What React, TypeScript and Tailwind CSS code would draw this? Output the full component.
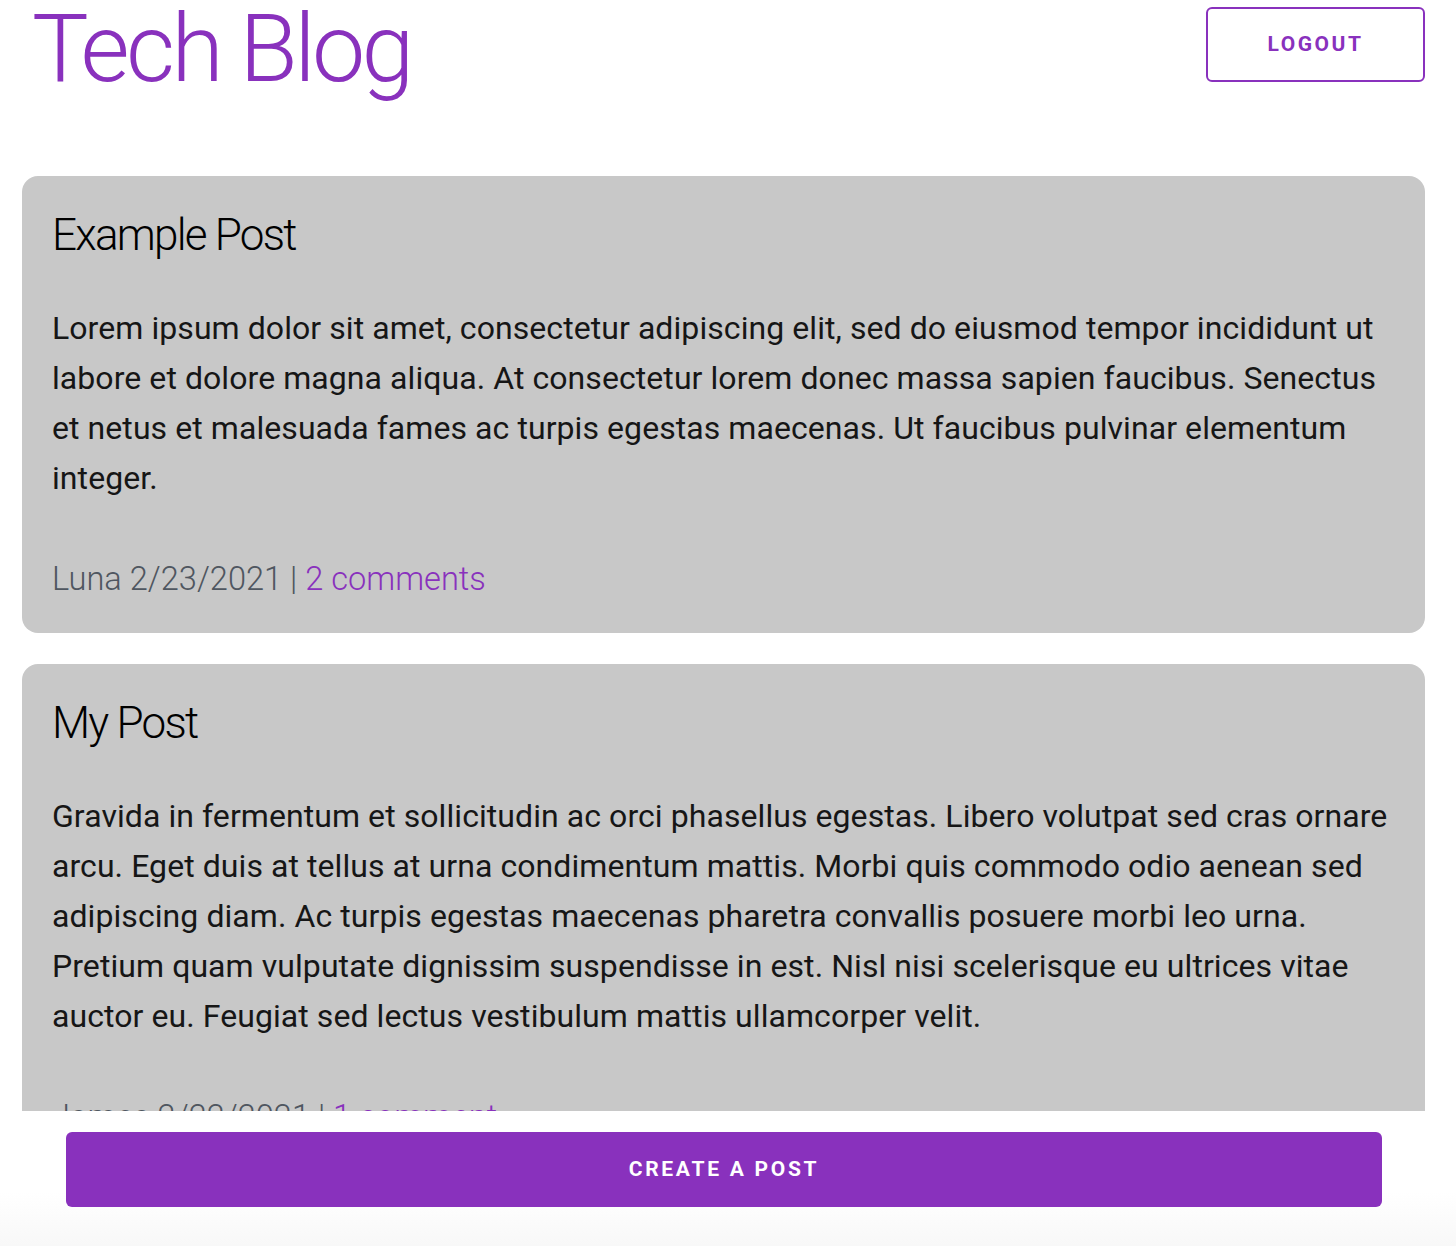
import React from "react";

type Post = {
    title: string;
    body: string;
    author: string;
    date: string;
    comments: number;
}

const posts: Post[] = [
    {
        title: "Example Post",
        body: "Lorem ipsum dolor sit amet, consectetur adipiscing elit, sed do eiusmod tempor incididunt ut labore et dolore magna aliqua. At consectetur lorem donec massa sapien faucibus. Senectus et netus et malesuada fames ac turpis egestas maecenas. Ut faucibus pulvinar elementum integer.",
        author: "Luna",
        date: "2/23/2021",
        comments: 2,
    },
    {
        title: "My Post",
        body: "Gravida in fermentum et sollicitudin ac orci phasellus egestas. Libero volutpat sed cras ornare arcu. Eget duis at tellus at urna condimentum mattis. Morbi quis commodo odio aenean sed adipiscing diam. Ac turpis egestas maecenas pharetra convallis posuere morbi leo urna. Pretium quam vulputate dignissim suspendisse in est. Nisl nisi scelerisque eu ultrices vitae auctor eu. Feugiat sed lectus vestibulum mattis ullamcorper velit.",
        author: "James",
        date: "2/22/2021",
        comments: 1,
    },
]

const PostCard = ({ post }: { post: Post }) => {
    return (
        <div className="rounded-2xl bg-[#c8c8c8] pl-[30px] pr-[30px] pt-[37px] pb-[29px]">
            <h2 className="text-[44px] leading-[44px] font-light tracking-[-0.04em] text-black">{post.title}</h2>
            <p className="mt-[46px] text-[32px] leading-[50px] tracking-[0.07px] text-[#161616]">{post.body}</p>
            <div className="mt-[51px] text-[32.6px] leading-[50px] font-light text-[#4f5660]">
                {post.author} {post.date} | <span className="text-[#8931bd]">{post.comments} {post.comments === 1 ? "comment" : "comments"}</span>
            </div>
        </div>
    )
}

export default function App() {
    return (
        <div className="min-h-screen bg-white font-['Roboto',sans-serif] pb-[160px]">
            <header className="flex items-start justify-between pl-[32px] pr-[31px]">
                <h1 className="mt-px pb-[8px] text-[95px] leading-[96px] font-light tracking-[-0.038em] text-[#8931bd]">Tech Blog</h1>
                <button className="mt-[7px] h-[75px] w-[219px] rounded-md border-2 border-[#8931bd] text-[21px] font-bold tracking-[0.12em] text-[#8931bd]">
                    LOGOUT
                </button>
            </header>
            <main className="mt-[71px] flex flex-col gap-[31px] pl-[22px] pr-[31px]">
                {posts.map((post, index) => (
                    <PostCard post={post} key={index} />
                ))}
            </main>
            <div className="fixed bottom-0 left-0 right-0 h-[135px] bg-gradient-to-b from-white from-60% to-[#f8f8f8] pl-[66px] pr-[74px] pt-[21px]">
                <button className="h-[75px] w-full rounded-md bg-[#8931bd] text-[21px] font-bold tracking-[0.13em] text-white">
                    CREATE A POST
                </button>
            </div>
        </div>
    )
}
